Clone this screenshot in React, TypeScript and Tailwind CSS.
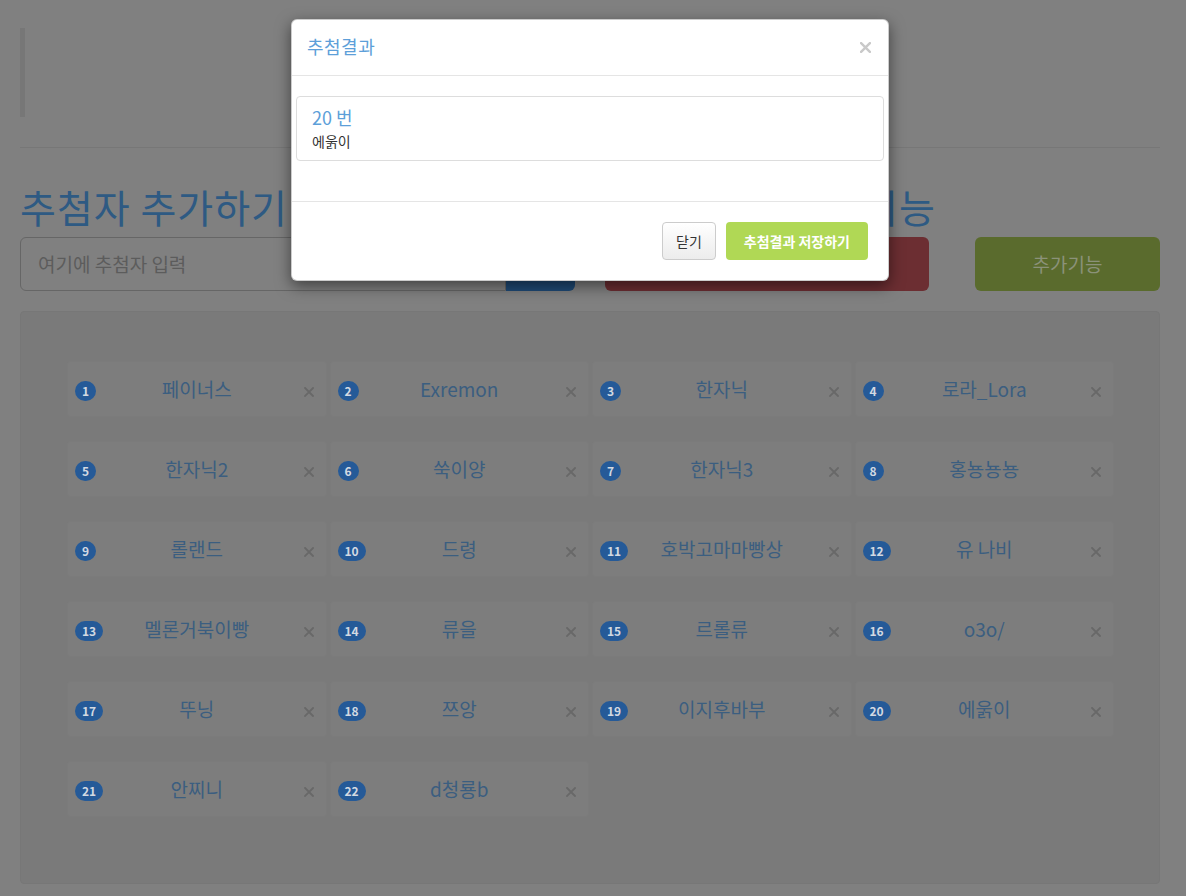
const font = { fontFamily: '"Noto Sans CJK KR", "Noto Sans", sans-serif' };

const people = [
  '페이너스', 'Exremon', '한자닉', '로라_Lora',
  '한자닉2', '쑥이양', '한자닉3', '홍뇽뇽뇽',
  '롤랜드', '드령', '호박고마마빵상', '유 나비',
  '멜론거북이빵', '류을', '르롤류', 'o3o/',
  '뚜닝', '쯔앙', '이지후바부', '에욹이',
  '안찌니', 'd청룡b',
];

function Times({ size, color, stroke }: { size: number; color: string; stroke: number }) {
  return (
    <svg width={size} height={size} viewBox="0 0 10 10" fill="none" stroke={color} strokeWidth={stroke} strokeLinecap="square">
      <path d="M1 1 L9 9 M9 1 L1 9" />
    </svg>
  );
}

function Card({ n, name }: { n: number; name: string }) {
  return (
    <div className="grid h-[56px] grid-cols-[40px_1fr_40px] items-center rounded-[3px] border border-[#7b7b7b] bg-[#7d7d7d]">
      <div className="pl-[7px]">
        <span className="inline-block h-5 rounded-full bg-[#255a98] px-[7px] text-center text-[12px] font-bold leading-5 text-[#d3d9e2]">
          {n}
        </span>
      </div>
      <div className="text-center text-[19px] leading-7 whitespace-nowrap text-[#3b5e80]">{name}</div>
      <div className="mt-[6px] flex justify-end pr-[12px]">
        <Times size={10} color="#686868" stroke={1.8} />
      </div>
    </div>
  );
}

export default function App() {
  return (
    <div className="relative min-h-[896px] w-full bg-[#808080]" style={font}>
      <div className="ml-[20px] w-[1140px] pt-[28px]">
        {/* blockquote */}
        <div className="h-[89px] border-l-[5px] border-[#777777]" />
        <hr className="mt-[30px] border-0 border-t border-[#777777]" />

        <div className="flex gap-[30px]">
          <div className="w-[555px]">
            <h1 className="mt-[38px] h-10 text-[39px] leading-10 font-normal tracking-[1px] whitespace-nowrap text-[#2e5a83]">
              추첨자 추가하기
            </h1>
            <div className="mt-[11px] flex h-[54px]">
              <div className="flex flex-1 items-center rounded-l-[6px] border border-[#666666] px-[17px] text-[19px] text-[#5c5c5c]">
                여기에 추첨자 입력
              </div>
              <div className="flex w-[69px] items-center justify-center rounded-r-[6px] bg-[#1f4a75] text-[18px] text-[#808080]">
                추가
              </div>
            </div>
          </div>
          <div className="w-[555px]">
            <h1 className="mt-[38px] h-10 text-[39px] leading-10 font-normal tracking-[1px] whitespace-nowrap text-[#2e5a83]">
              추첨하기 / 추가기능
            </h1>
            <div className="mt-[11px] flex h-[54px]">
              <div className="flex w-[324px] items-center justify-center rounded-[6px] bg-[#6c2e32] text-[18px] text-[#8a8080]">
                추첨하기
              </div>
              <div className="ml-[46px] flex w-[185px] items-center justify-center rounded-[6px] bg-[#5a6b2d] text-[19px] text-[#8b9279]">
                추가기능
              </div>
            </div>
          </div>
        </div>

        <div className="mt-[20px] rounded-[4px] border border-[#777777] bg-[#7a7a7a] pt-[49px] pb-[66px] pl-[46px]">
          <div className="grid w-[1047px] grid-cols-4 gap-x-[3px] gap-y-[24px]">
            {people.map((p, i) => (
              <Card key={i} n={i + 1} name={p} />
            ))}
          </div>
        </div>
      </div>

      {/* modal */}
      <div className="absolute top-[19px] left-[291px] w-[598px] rounded-[6px] border border-black/20 bg-white shadow-[0_5px_15px_rgba(0,0,0,0.5)]">
        <div className="flex h-[56px] items-center justify-between border-b border-[#e5e5e5] pr-[17px] pl-[15px]">
          <div className="-mt-[3px] text-[18px] leading-6 tracking-[0.5px] text-[#5d9fd9]">추첨결과</div>
          <Times size={11} color="#c9c9c9" stroke={2.2} />
        </div>
        <div className="px-[4px] pt-[20px] pb-[40px]">
          <div className="h-[65px] rounded-[4px] border border-[#dddddd] px-[15px] pt-[8px]">
            <div className="text-[18px] leading-6 text-[#5d9fd9]">20 번</div>
            <div className="mt-[2px] text-[14px] leading-5 text-[#333333]">에욹이</div>
          </div>
        </div>
        <div className="flex justify-end gap-[10px] border-t border-[#e5e5e5] p-[20px]">
          <div className="flex h-[38px] items-center rounded-[4px] border border-[#cccccc] bg-gradient-to-b from-white to-[#ececec] px-[13px] text-[14px] text-[#333333]">
            닫기
          </div>
          <div className="flex h-[38px] items-center rounded-[4px] bg-[#b0d855] px-[18px] text-[14px] font-bold text-white">
            추첨결과 저장하기
          </div>
        </div>
      </div>
    </div>
  );
}
